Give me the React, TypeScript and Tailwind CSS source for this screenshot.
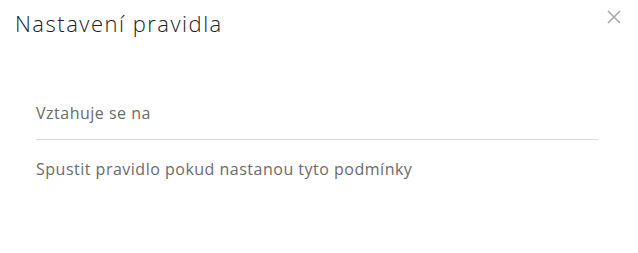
export default function App() {
  return (
    <div
      className="w-[638px] h-[253px] bg-white relative"
      style={{ fontFamily: '"Open Sans", Lato, sans-serif' }}
    >
      <div className="flex items-start justify-between pl-[15px] pr-[17px] pt-[7px]">
        <h2 className="text-[22px] leading-[32px] font-light tracking-[1.5px] text-[#212121]">
          Nastavení pravidla
        </h2>
        <button className="mt-[3px] text-[#a8a8a8]">
          <svg width="14" height="14" viewBox="0 0 14 14" fill="none" stroke="currentColor" strokeWidth="1.6">
            <path d="M1 1L13 13M13 1L1 13" />
          </svg>
        </button>
      </div>

      <div className="px-[36px] pt-[63px]">
        <div className="pb-[15px] border-b border-[#dcdcdc] mr-[4px]">
          <p className="text-[16px] leading-[22px] tracking-[0.5px] text-[#6b6b6b]">Vztahuje se na</p>
        </div>
        <p className="pt-[18px] text-[16px] leading-[22px] tracking-[0.5px] text-[#6b6b6b]">
          Spustit pravidlo pokud nastanou tyto podmínky
        </p>
      </div>
    </div>
  )
}
